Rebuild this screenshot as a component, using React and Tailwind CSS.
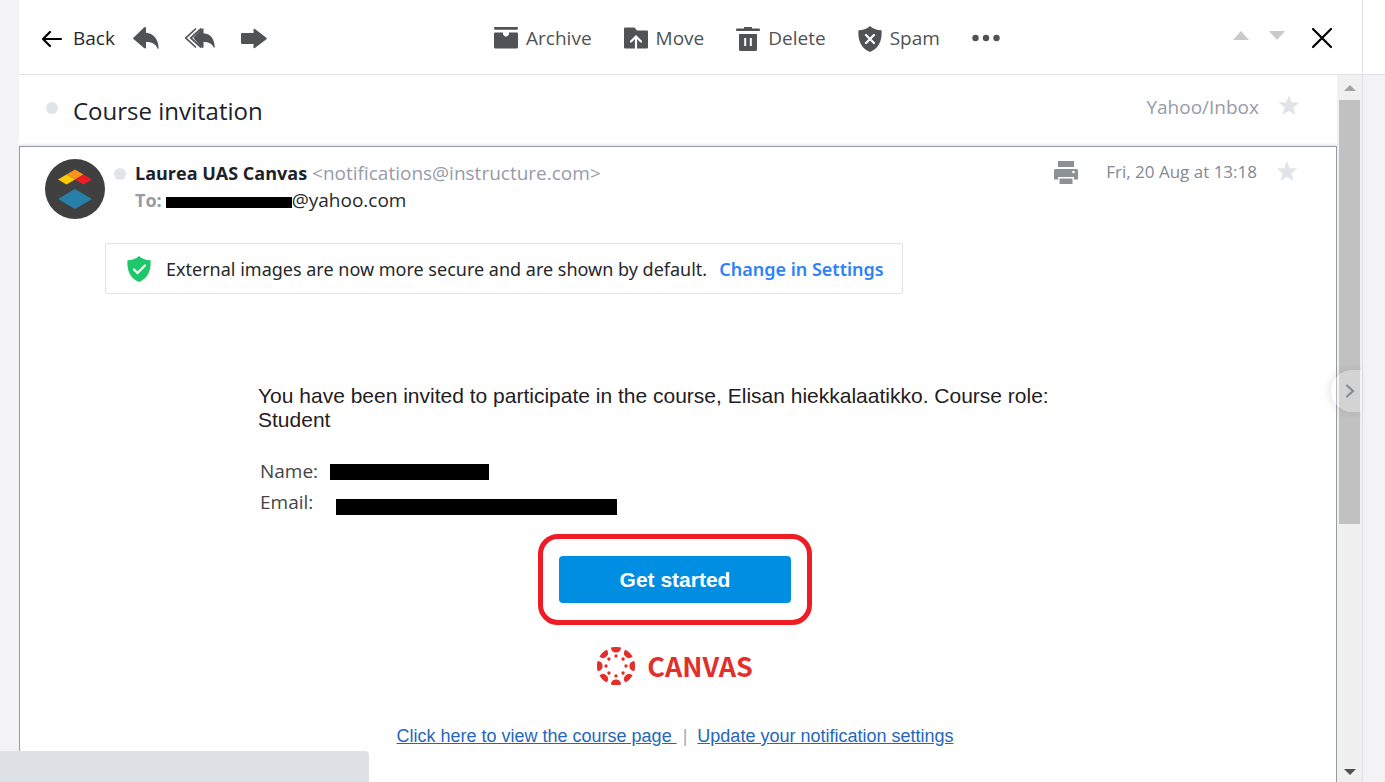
import React from "react";

const STAR =
  "M12 1l2.700 7.300 7.800.3-6.100 4.900 2.100 7.500L12 16.700l-6.500 4.300 2.100-7.500L1.500 8.600l7.800-.3z";

const Star = ({ label }) => (
  <button type="button" aria-label={label} className="shrink-0 text-[#e0e4e9]">
    <svg className="size-6" viewBox="0 0 24 24" fill="currentColor">
      <path d={STAR} />
    </svg>
  </button>
);

const BackIcon = () => (
  <svg
    className="size-6"
    viewBox="0 0 24 24"
    fill="none"
    stroke="#000"
    strokeWidth="2.200"
    strokeLinecap="round"
    strokeLinejoin="round"
  >
    <path d="M9 5l-7 7 7 7M2 12h18" />
  </svg>
);

const ReplyIcon = () => (
  <svg className="h-6 w-7" viewBox="0 0 28 24" fill="currentColor">
    <path d="M1.200 11L12 .5Q14-.5 14 1v4.700c8 .6 12.400 7 12.600 15.500q-.4 1.400-1.200 0C23.500 17 20 14.700 14 15v5.500q0 1.500-2 .5L1.200 11.800q-.5-.4 0-.8z" />
  </svg>
);

const ReplyAllIcon = () => (
  <svg className="h-6 w-8" viewBox="0 0 32 24" fill="currentColor">
    <path d="M9.800 10.100L17.700 2Q19.500.5 19.500 2v4.200c7.500.6 11 6 11.200 13.800q-.4 1.400-1.200 0C27.500 16.500 24.500 14.800 19.500 15v5q0 1.500-1.800.5L9.800 11.500q-.7-.7 0-1.400z" />
    <path d="M12 1.500L1.800 11 12 20.500M17.300 1.500L6.700 11l10.600 9.500" fill="none" stroke="currentColor" strokeWidth="1.700" />
  </svg>
);

const ForwardIcon = () => (
  <svg className="h-6 w-7" viewBox="0 0 28 24" fill="currentColor">
    <path d="M2 6h11.500V2.800q0-1.500 1.400-.7l11.500 8.700q.8.700 0 1.400l-11.500 8.700q-1.400.8-1.400-.7V17H2q-1 0-1-1V7q0-1 1-1z" />
  </svg>
);

const ArchiveIcon = () => (
  <svg className="size-6" viewBox="0 0 24 24" fill="currentColor">
    <path d="M1 0h22q1 0 1 1.300T23 2.700H1q-1 0-1-1.400T1 0zM1 5.500h8v2l2 2h2l2-2v-2h8q1 0 1 1V20q0 1.500-1.500 1.500h-21Q0 21.500 0 20V6.500q0-1 1-1z" />
  </svg>
);

const MoveIcon = () => (
  <svg className="size-6" viewBox="0 0 24 24" fill="currentColor">
    <path d="M1 .5h9.500l2.500 3h10q1 0 1 1v16q0 1-1 1H1q-1 0-1-1v-19q0-1 1-1z" />
    <path
      d="M12 21.500V10M7 14.500l5-5 5 5"
      fill="none"
      stroke="#fff"
      strokeWidth="2.200"
      strokeLinecap="round"
    />
  </svg>
);

const DeleteIcon = () => (
  <svg className="size-6" viewBox="0 0 24 24" fill="currentColor">
    <path d="M8 0h8v1.500h7q1 0 1 1.200T23 4H1Q0 4 0 2.700t1-1.200h7zM3 7h18v15.500q0 1.500-1.500 1.500h-15Q3 24 3 22.500z" />
    <path d="M9.200 11v8M14.800 11v8" stroke="#fff" strokeWidth="2" />
  </svg>
);

const SpamIcon = () => (
  <svg className="h-[26px] w-6" viewBox="0 0 24 26" fill="currentColor">
    <path d="M12 0c2.500 2.700 6.500 4.200 11.500 4.300.8 9-2 17.700-11.500 21.700C2.500 22-.3 13.300.5 4.300 5.500 4.200 9.500 2.700 12 0z" />
    <path d="M8 9l8 8M16 9l-8 8" stroke="#fff" strokeWidth="2.200" strokeLinecap="round" />
  </svg>
);

const SecureIcon = () => (
  <svg className="h-[26px] w-6" viewBox="0 0 24 26" fill="#1dc76a">
    <path d="M12 0c2.500 2.700 6.500 4.200 11.500 4.300.8 9-2 17.700-11.500 21.700C2.500 22-.3 13.300.5 4.300 5.500 4.200 9.500 2.700 12 0z" />
    <path
      d="M7 13.500l3.500 3.500 7.500-7.500"
      fill="none"
      stroke="#fff"
      strokeWidth="2.200"
      strokeLinecap="round"
    />
  </svg>
);

const PrintIcon = () => (
  <svg className="size-6" viewBox="0 0 24 24" fill="#8c9196">
    <path d="M4 1h16v6H4zM1.500 9h21q1.500 0 1.500 1.500v9h-4V17H4v2.500H0v-9Q0 9 1.500 9z" />
    <path d="M5.500 18.500h13V24h-13z" />
    <circle cx="19.500" cy="12" r="1.300" fill="#fff" />
  </svg>
);

const Avatar = () => (
  <svg className="size-[60px] shrink-0" viewBox="0 0 60 60">
    <circle cx="30" cy="30" r="30" fill="#404041" />
    <path d="M30 10.500l8.500 5-8.500 5-8.500-5z" fill="#f7941d" />
    <path d="M21.500 15.500l8.500 5-8.500 5-8.500-5z" fill="#ffcb05" />
    <path d="M38.500 15.500l8.500 5-8.500 5-8.500-5z" fill="#ed1c24" />
    <path d="M30 30l17 10-17 10-17-10z" fill="#2680a8" />
  </svg>
);

const SPOKES = [0, 45, 90, 135, 180, 225, 270, 315];

const CanvasMark = () => (
  <svg className="size-[38px]" viewBox="0 0 38 38" fill="#e13029">
    {SPOKES.map((angle) => (
      <g key={angle} transform={`rotate(${angle} 19 19)`}>
        <path d="M13.900.6Q19-.7 24.100.6 23.700 5.600 19 5.600T13.900.6z" />
        <circle cx="19" cy="9" r="1.700" />
      </g>
    ))}
  </svg>
);

const actions = [
  { label: "Archive", icon: <ArchiveIcon /> },
  { label: "Move", icon: <MoveIcon /> },
  { label: "Delete", icon: <DeleteIcon /> },
  { label: "Spam", icon: <SpamIcon /> },
];

const Toolbar = () => (
  <header className="flex h-[75px] shrink-0 items-center justify-between border-b border-[#e0e2e6] pt-[3px] pr-7 pl-[22px] text-[#505254]">
    <div className="flex items-center gap-[17px]">
      <button type="button" className="flex items-center gap-2 text-[#26282a]">
        <BackIcon />
        <span>Back</span>
      </button>
      <div className="flex items-center gap-6">
        <button type="button" aria-label="Reply">
          <ReplyIcon />
        </button>
        <button type="button" aria-label="Reply all">
          <ReplyAllIcon />
        </button>
        <button type="button" aria-label="Forward">
          <ForwardIcon />
        </button>
      </div>
    </div>

    <div className="mr-[7px] flex items-center gap-8">
      {actions.map((action) => (
        <button key={action.label} type="button" className="flex items-center gap-2">
          {action.icon}
          <span>{action.label}</span>
        </button>
      ))}
      <button type="button" aria-label="More">
        <svg className="h-6 w-7" viewBox="0 0 28 24" fill="currentColor">
          <circle cx="3.500" cy="11" r="3.200" />
          <circle cx="14" cy="11" r="3.200" />
          <circle cx="24.500" cy="11" r="3.200" />
        </svg>
      </button>
    </div>

    <div className="flex items-center gap-5">
      <button type="button" aria-label="Previous message" className="pb-[6px]">
        <svg className="h-[9px] w-4" viewBox="0 0 16 9" fill="#cacaca">
          <path d="M8 0l8 9H0z" />
        </svg>
      </button>
      <button type="button" aria-label="Next message" className="pb-[6px]">
        <svg className="h-[9px] w-4" viewBox="0 0 16 9" fill="#cacaca">
          <path d="M0 0h16L8 9z" />
        </svg>
      </button>
      <button type="button" aria-label="Close" className="pl-[5px]">
        <svg className="size-6" viewBox="0 0 24 24" stroke="#000" strokeWidth="2.200" strokeLinecap="round">
          <path d="M3 2l18 18M21 2L3 20" />
        </svg>
      </button>
    </div>
  </header>
);

const Scrollbar = () => (
  <div className="flex w-[25px] shrink-0 flex-col items-center bg-[#f0f0f0]">
    <button type="button" aria-label="Scroll up" className="flex h-[25px] items-center">
      <svg className="h-[6px] w-3" viewBox="0 0 12 6" fill="#a3a3a3">
        <path d="M6 0l6 6H0z" />
      </svg>
    </button>
    <div className="w-full flex-1 px-[2px]">
      <div className="h-[64%] bg-[#c1c1c1]" />
    </div>
    <button type="button" aria-label="Scroll down" className="flex h-5 items-center">
      <svg className="h-[6px] w-3" viewBox="0 0 12 6" fill="#505050">
        <path d="M0 0h12L6 6z" />
      </svg>
    </button>
  </div>
);

const Message = () => (
  <article className="flex-1 border border-b-0 border-[#979ba7] shadow-[0_-1px_3px_rgba(0,0,0,0.15)]">
    <div className="flex items-start pt-3 pr-[37px] pl-[25px]">
      <Avatar />
      <span className="mt-[9px] ml-[9px] size-3 shrink-0 rounded-full bg-[#e0e4e9]" />
      <div className="mt-px ml-[9px] flex-1 leading-[27px]">
        <p className="text-[#979ba7]">
          <span className="text-[18px] font-bold text-[#1d2228]">Laurea UAS Canvas</span>{" "}
          &lt;notifications@instructure.com&gt;
        </p>
        <p className="flex items-center text-[#26282a]">
          <span className="text-[18px] font-bold text-[#979ba7]">To:</span>
          <span className="mt-1 ml-1 h-[11px] w-[126px] bg-black" />
          @yahoo.com
        </p>
      </div>
      <div className="mt-px flex items-center">
        <button type="button" aria-label="Print">
          <PrintIcon />
        </button>
        <time className="mr-[18px] ml-7 text-[17px] leading-6 text-[#828a93]">
          Fri, 20 Aug at 13:18
        </time>
        <Star label="Star this message" />
      </div>
    </div>

    <div className="mt-6 ml-[85px] flex h-[51px] w-fit items-center rounded-xs border border-[#e0e4e9] pr-[18px] pl-[21px] font-['Noto_Sans',sans-serif] text-[18px] text-[#26282a]">
      <SecureIcon />
      <p className="mt-[2px] ml-[15px] flex gap-3">
        External images are now more secure and are shown by default.{" "}
        <a href="#settings" className="font-semibold text-[#2c82f6]">
          Change in Settings
        </a>
      </p>
    </div>

    <div className="mx-auto mt-[90px] w-full max-w-[840px] pr-1">
      <p className="max-w-[800px] font-['Liberation_Sans',sans-serif] text-[21px] leading-6 text-[#1f2023]">
        You have been invited to participate in the course, Elisan hiekkalaatikko. Course role:
        Student
      </p>
      <dl className="mt-6 pl-[2px] leading-[31px] text-[#444]">
        <div className="flex items-center">
          <dt className="w-[70px]">Name:</dt>
          <dd className="h-4 w-[159px] bg-black" />
        </div>
        <div className="flex items-center">
          <dt className="w-[76px]">Email:</dt>
          <dd className="mt-2 h-4 w-[281px] bg-black" />
        </div>
      </dl>

      <div className="mt-4 flex flex-col items-center pr-[2px] font-['Liberation_Sans',sans-serif]">
        <div className="w-[274px] rounded-[20px] border-[5px] border-[#ee1c24] px-4 py-[17px]">
          <button
            type="button"
            className="h-[47px] w-full rounded-sm bg-[#008ee2] text-[21px] font-bold text-white"
          >
            Get started
          </button>
        </div>
        <div className="mt-[22px] flex h-[38px] items-center gap-3">
          <CanvasMark />
          <span className="font-['Noto_Sans_CJK_JP',sans-serif] text-[27px] leading-[38px] font-bold text-[#e13029]">
            CANVAS
          </span>
        </div>
        <div className="mt-[39px] flex gap-[6px] text-[18px] leading-6 text-[#2566bb]">
          <a href="#course" className="whitespace-pre underline">
            {"Click here to view the course page "}
          </a>
          <span className="text-[#a5acb5]">|</span>
          <a href="#notifications" className="ml-1 underline">
            Update your notification settings
          </a>
        </div>
      </div>
    </div>
  </article>
);

const App = () => {
  return (
    <div className="relative flex h-screen min-h-[600px] overflow-hidden bg-[#f3f3f6] pl-[19px] font-['Open_Sans','Noto_Sans',sans-serif] text-[19px]">
      <main className="flex min-w-0 flex-1 flex-col bg-white">
        <Toolbar />
        <div className="flex min-h-0 flex-1">
          <section className="flex min-w-0 flex-1 flex-col overflow-hidden">
            <div className="flex h-[71px] shrink-0 items-center pr-9 pl-[27px]">
              <span className="mb-[6px] size-3 rounded-full bg-[#e0e4e9]" />
              <h1 className="ml-[15px] flex-1 text-2xl text-[#1d2228]">Course invitation</h1>
              <span className="mr-[18px] mb-[6px] text-[#979ba7]">Yahoo/Inbox</span>
              <span className="mb-[10px] flex">
                <Star label="Star this conversation" />
              </span>
            </div>
            <Message />
          </section>
          <Scrollbar />
        </div>
      </main>

      <aside className="relative w-[23px] shrink-0 border-l border-[#e0e0e8]">
        <div className="h-[75px] border-b border-[#e0e2e6] bg-white" />
        <button
          type="button"
          aria-label="Show side panel"
          className="absolute top-[370px] -left-8 flex h-[42px] w-[31px] items-center justify-center rounded-l-full bg-white/30 pl-[6px] shadow-[-2px_0_8px_rgba(0,0,0,0.1)]"
        >
          <svg
            className="h-4 w-[10px]"
            viewBox="0 0 10 16"
            fill="none"
            stroke="#878c91"
            strokeWidth="2.200"
            strokeLinecap="round"
          >
            <path d="M2 2.500L8 8l-6 5.500" />
          </svg>
        </button>
      </aside>

      <div className="absolute bottom-0 left-0 h-[31px] w-[369px] rounded-tr-sm bg-[#dee1e6]" />
    </div>
  );
};

export default App;
